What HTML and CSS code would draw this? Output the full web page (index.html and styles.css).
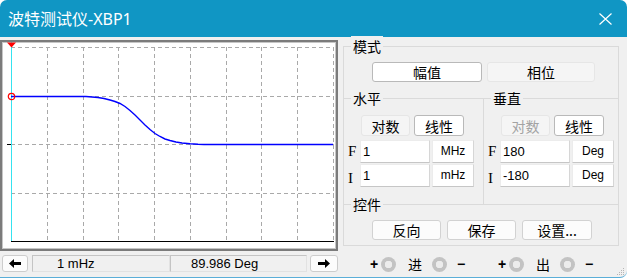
FILE: index.html
```html
<!DOCTYPE html>
<html lang="zh">
  <head>
    <meta charset="UTF-8" />
    <title>波特测试仪-XBP1</title>
    <link rel="stylesheet" href="styles.css">
  </head>
  <body>
    <div class="window">
      <!-- thanh tiêu đề -->
      <header class="titlebar">
        <span class="title">波特测试仪-XBP1</span>
        <svg class="close" width="13" height="12" viewBox="0 0 13 12">
          <path d="M0.5 0.5 L12.5 11.5 M12.5 0.5 L0.5 11.5" stroke="#fff" stroke-width="1.2" fill="none" />
        </svg>
      </header>

      <div class="main">
        <!-- cột trái: đồ thị + thanh trạng thái -->
        <div class="left">
          <div class="plot">
            <svg width="334" height="207" viewBox="0 0 334 207">
              <g stroke="#a9a9a9" stroke-width="1" stroke-dasharray="4 3" shape-rendering="crispEdges">
                <path d="M9 5.5 H331.5 M9 54.5 H331.5 M9 102.5 H331.5 M9 151.5 H331.5" />
                <path d="M45.5 5 V199 M81.5 5 V199 M116.5 5 V199 M152.5 5 V199 M188.5 5 V199 M224.5 5 V199 M259.5 5 V199 M295.5 5 V199 M331.5 5 V199" />
              </g>
              <path d="M9 199.5 H332" stroke="#000" stroke-width="1" shape-rendering="crispEdges" />
              <path d="M9.5 0 V199" stroke="#35e3f0" stroke-width="1" shape-rendering="crispEdges" />
              <path d="M5 102.5 H9" stroke="#000" stroke-width="1" shape-rendering="crispEdges" />
              <path d="M9 54.5 H84 L90 55 L96 55.5 L102 56.5 L108 58 L113 59.5 L118 61.5 L123 64.5 L128 68.5 L133 73 L138 78 L143 83 L148 87.5 L153 91.5 L158 94.5 L163 97 L168 98.5 L174 100 L180 101 L188 101.8 L196 102.3 L202 102.5 H331" stroke="#0000ff" stroke-width="1.4" fill="none" />
              <circle cx="9.5" cy="54.5" r="3.2" stroke="#ff0000" stroke-width="1.2" fill="none" />
              <polygon points="5,0.5 14,0.5 9.5,5.5" fill="#ff0000" />
            </svg>
          </div>

          <div class="status">
            <div class="arrow">
              <svg width="12" height="9" viewBox="0 0 12 9"><polygon points="0,4.5 5,0 5,3 12,3 12,6 5,6 5,9" fill="#000" /></svg>
            </div>
            <div class="readout freq">1 mHz</div>
            <div class="readout phase">89.986 Deg</div>
            <div class="arrow next">
              <svg width="12" height="9" viewBox="0 0 12 9"><polygon points="12,4.5 7,0 7,3 0,3 0,6 7,6 7,9" fill="#000" /></svg>
            </div>
          </div>
        </div>

        <!-- cột phải: bảng điều khiển -->
        <div class="right">
          <div class="panel">
            <div class="legend">模式</div>
            <div class="mode-row">
              <button class="btn on mode-amp">幅值</button>
              <button class="btn mode-phase">相位</button>
            </div>

            <div class="split">
              <div class="axis">
                <div class="legend">水平</div>
                <div class="scale-row">
                  <button class="btn">对数</button>
                  <button class="btn on">线性</button>
                </div>
                <div class="params">
                  <div class="param"><span class="tag">F</span><div class="field">1</div><div class="field unit">MHz</div></div>
                  <div class="param"><span class="tag low">I</span><div class="field">1</div><div class="field unit">mHz</div></div>
                </div>
              </div>
              <div class="axis vert">
                <div class="legend">垂直</div>
                <div class="scale-row">
                  <button class="btn off">对数</button>
                  <button class="btn on">线性</button>
                </div>
                <div class="params">
                  <div class="param"><span class="tag">F</span><div class="field">180</div><div class="field unit">Deg</div></div>
                  <div class="param"><span class="tag low">I</span><div class="field">-180</div><div class="field unit">Deg</div></div>
                </div>
              </div>
            </div>

            <div class="controls">
              <div class="legend">控件</div>
              <div class="ctrl-row">
                <button class="btn ctrl">反向</button>
                <button class="btn ctrl">保存</button>
                <button class="btn ctrl wider">设置...</button>
              </div>
            </div>
          </div>

          <!-- đầu nối vào / ra -->
          <div class="terminals">
            <div class="term">
              <span class="sign">+</span><span class="ring"></span><span class="name">进</span><span class="ring"></span><span class="sign">−</span>
            </div>
            <div class="term">
              <span class="sign">+</span><span class="ring"></span><span class="name">出</span><span class="ring"></span><span class="sign">−</span>
            </div>
          </div>
        </div>
      </div>

      <svg class="grip" width="10" height="10" viewBox="0 0 10 10">
        <g fill="#b5b5b5">
          <rect x="8" y="2" width="1" height="1" /><rect x="6" y="4" width="1" height="1" /><rect x="8" y="4" width="1" height="1" />
          <rect x="4" y="6" width="1" height="1" /><rect x="6" y="6" width="1" height="1" /><rect x="8" y="6" width="1" height="1" />
          <rect x="2" y="8" width="1" height="1" /><rect x="4" y="8" width="1" height="1" /><rect x="6" y="8" width="1" height="1" /><rect x="8" y="8" width="1" height="1" />
        </g>
      </svg>
    </div>
  </body>
</html>
```

FILE: styles.css
```css
* {
  padding: 0;
  margin: 0;
  box-sizing: border-box;
}

body {
  background-color: #fff;
  font-family: "Noto Sans CJK SC", sans-serif;
}

.window {
  --line: #dadada;
  width: 627px;
  height: 278px;
  background-color: #f0f0f0;
  border-radius: 7px 7px 7px 0;
  border-bottom: 1px solid #5aaed8;
  overflow: hidden;
  position: relative;
}

.titlebar {
  height: 37px;
  background-color: #1096c4;
  display: flex;
  align-items: center;
  justify-content: space-between;
  padding: 1px 15px 0 8px;
}

.title {
  color: #fff;
  font-family: "Noto Sans", "Noto Sans CJK SC", sans-serif;
  font-size: 16px;
  line-height: 20px;
}

.close {
  display: block;
}

.main {
  display: flex;
  gap: 5px;
}

/* đồ thị */
.left {
  width: 338px;
  margin-top: 3px;
}

.plot {
  height: 211px;
  border: 2px solid #7b7b7b;
  box-shadow: inset 0 0 0 1px #c6c6c6;
  background-color: #fff;
}

.plot svg {
  display: block;
}

.status {
  display: flex;
  height: 17px;
  margin-top: 4px;
}

.arrow {
  width: 26px;
  height: 17px;
  margin-left: 2px;
  background-color: #fcfcfc;
  border: 1px solid #cdcdcd;
  border-radius: 3px;
  display: flex;
  align-items: center;
  justify-content: center;
}

.arrow.next {
  width: 28px;
  margin-left: 3px;
}

.arrow svg {
  display: block;
}

.readout {
  height: 17px;
  background-color: #f0f0f0;
  border: 1px solid #c4c4c4;
  border-right-color: #e2e2e2;
  border-bottom-color: #e2e2e2;
  font-family: "Liberation Sans", sans-serif;
  font-size: 13px;
  line-height: 15px;
  color: #000;
}

.freq {
  width: 138px;
  margin-left: 4px;
  padding-left: 24px;
}

.phase {
  width: 137px;
  padding-left: 20px;
}

/* bảng điều khiển */
.right {
  width: 276px;
  margin-top: 9px;
}

.panel {
  border: 1px solid var(--line);
  padding-bottom: 5px;
}

.legend {
  width: max-content;
  margin: -11px 0 0 7px;
  padding: 0 2px;
  background-color: #f0f0f0;
  font-size: 14px;
  line-height: 20px;
  color: #000;
}

.btn {
  height: 20px;
  font-family: inherit;
  font-size: 14px;
  line-height: 18px;
  color: #000;
  background-color: #f5f5f5;
  border: 1px solid #e6e6e6;
  border-radius: 3px;
}

.btn.on {
  background-color: #fff;
  border-color: #b9b9b9;
}

.btn.off {
  color: #a3a3a3;
}

.mode-row {
  display: flex;
  gap: 5px;
  margin-top: 6px;
  padding-left: 28px;
}

.mode-amp {
  width: 110px;
}

.mode-phase {
  width: 108px;
}

.split {
  display: flex;
  margin-top: 16px;
  border-top: 1px solid var(--line);
}

.axis {
  width: 139px;
  padding-bottom: 17px;
}

.axis.vert {
  flex: 1;
  border-left: 1px solid var(--line);
}

.scale-row {
  display: flex;
  gap: 4px;
  margin-top: 7px;
  padding-left: 17px;
}

.scale-row .btn {
  width: 49px;
  height: 21px;
}

.scale-row .btn + .btn {
  width: 50px;
}

.params {
  display: flex;
  flex-direction: column;
  gap: 1px;
  margin-top: 4px;
}

.param {
  display: flex;
  align-items: center;
  height: 23px;
}

.tag {
  width: 16px;
  padding-left: 4px;
  font-family: "Liberation Serif", serif;
  font-size: 15px;
  line-height: 17px;
}

.tag.low {
  padding-top: 6px;
}

.field {
  width: 70px;
  height: 23px;
  background-color: #fff;
  border: 1px solid #ececec;
  border-right-color: #d6d6d6;
  border-bottom-color: #c6c6c6;
  font-family: "Liberation Sans", sans-serif;
  font-size: 13px;
  line-height: 21px;
  padding-left: 2px;
}

.field.unit {
  width: 42px;
  margin-left: 2px;
  padding: 0 0 2px 0;
  font-size: 12px;
  text-align: center;
}

.controls {
  border-top: 1px solid var(--line);
}

.ctrl-row {
  display: flex;
  gap: 6px;
  margin-top: 6px;
  padding-left: 28px;
}

.btn.ctrl {
  width: 69px;
  background-color: #fcfcfc;
  border-color: #d2d2d2;
}

.btn.ctrl.wider {
  width: 70px;
}

/* đầu nối */
.terminals {
  display: flex;
  gap: 35px;
  height: 16px;
  margin-top: 10px;
  padding-left: 27px;
}

.term {
  display: flex;
  align-items: center;
  font-size: 14px;
  line-height: 16px;
}

.sign {
  width: 8px;
  font-family: "Liberation Sans", sans-serif;
  font-weight: bold;
  font-size: 14px;
}

.sign:last-child {
  width: 6px;
  margin-left: 10px;
}

.ring {
  width: 15px;
  height: 15px;
  margin-left: 3px;
  border-radius: 50%;
  background: radial-gradient(circle, #ececec 0 3.5px, #c3c3c3 4px);
}

.name {
  width: 14px;
  margin-left: 12px;
}

.name + .ring {
  margin-left: 10px;
}

.grip {
  position: absolute;
  right: 2px;
  bottom: 1px;
}
```
